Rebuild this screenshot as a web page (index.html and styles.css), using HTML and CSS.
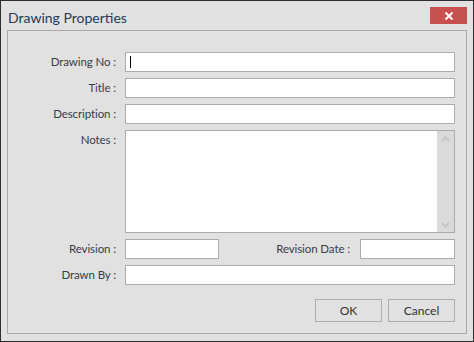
FILE: index.html
```html
<!DOCTYPE html>
<html lang="en">
<head>
  <meta charset="UTF-8" />
  <title>Drawing Properties</title>
  <link rel="stylesheet" href="styles.css">
</head>
<body>
  <div class="window">
    <div class="titlebar">
      <span class="title">Drawing Properties</span>
      <button class="close-btn" aria-label="Close">
        <svg width="10" height="8" viewBox="0 0 10 8">
          <path d="M1.5 0.5 L8.5 7.5 M8.5 0.5 L1.5 7.5" stroke="#fff" stroke-width="2" fill="none"/>
        </svg>
      </button>
    </div>

    <div class="panel">
      <div class="form">
        <label class="label">Drawing No :</label>
        <div class="field"><span class="caret"></span></div>

        <label class="label">Title :</label>
        <div class="field"></div>

        <label class="label">Description :</label>
        <div class="field"></div>

        <label class="label">Notes :</label>
        <div class="field notes">
          <div class="scrollbar">
            <svg width="9" height="6" viewBox="0 0 9 6"><path d="M1 5 L4.5 1.5 L8 5" stroke="#c4c4c4" stroke-width="2" fill="none"/></svg>
            <svg width="9" height="6" viewBox="0 0 9 6"><path d="M1 1 L4.5 4.5 L8 1" stroke="#c4c4c4" stroke-width="2" fill="none"/></svg>
          </div>
        </div>

        <label class="label">Revision :</label>
        <div class="split">
          <div class="field short"></div>
          <label class="label grow">Revision Date :</label>
          <div class="field date"></div>
        </div>

        <label class="label">Drawn By :</label>
        <div class="field"></div>
      </div>

      <div class="actions">
        <button class="btn">OK</button>
        <button class="btn">Cancel</button>
      </div>
    </div>
  </div>
</body>
</html>
```

FILE: styles.css
```css
* {
  box-sizing: border-box;
  margin: 0;
  padding: 0;
  font-family: Lato, 'Noto Sans', sans-serif;
}

body {
  background: #e1e1e1;
}

.window {
  width: 474px;
  height: 342px;
  background: #e1e1e1;
  border: 1px solid #2e2e2e;
  display: flex;
  flex-direction: column;
}

.titlebar {
  height: 29px;
  display: flex;
  align-items: flex-start;
  justify-content: space-between;
  padding: 0 6px 0 7px;
}

.title {
  font-size: 14px;
  color: #263a55;
  line-height: 20px;
  margin-top: 7px;
}

.close-btn {
  width: 37px;
  height: 17px;
  margin-top: 6px;
  background: #c75050;
  border: none;
  display: flex;
  align-items: center;
  justify-content: center;
}

.panel {
  flex: 1;
  margin: 0 6px 7px 6px;
  border: 1px solid #a9a9a9;
  padding: 21px 11px 11px 0;
  display: flex;
  flex-direction: column;
}

.form {
  display: grid;
  grid-template-columns: 108px 1fr;
  column-gap: 9px;
  row-gap: 6px;
}

.label {
  font-size: 11.5px;
  letter-spacing: -0.1px;
  color: #3b3b48;
  text-align: right;
  line-height: 20px;
  white-space: nowrap;
}

.field {
  height: 20px;
  background: #fff;
  border: 1px solid #ababab;
  position: relative;
}

.caret {
  position: absolute;
  left: 4px;
  top: 3px;
  width: 1px;
  height: 12px;
  background: #000;
}

.notes {
  height: 103px;
  display: flex;
  justify-content: flex-end;
}

.scrollbar {
  width: 17px;
  background: #dadada;
  display: flex;
  flex-direction: column;
  justify-content: space-between;
  align-items: center;
  padding: 5px 0 4px;
}

.split {
  display: flex;
  gap: 9px;
}

.short {
  width: 94px;
}

.grow {
  flex: 1;
  padding-right: 1px;
}

.date {
  width: 95px;
}

.actions {
  display: flex;
  justify-content: flex-end;
  gap: 6px;
  margin-top: 14px;
}

.btn {
  width: 67px;
  height: 23px;
  background: #e1e1e1;
  border: 1px solid #adadad;
  font-size: 12px;
  color: #333;
}
```
